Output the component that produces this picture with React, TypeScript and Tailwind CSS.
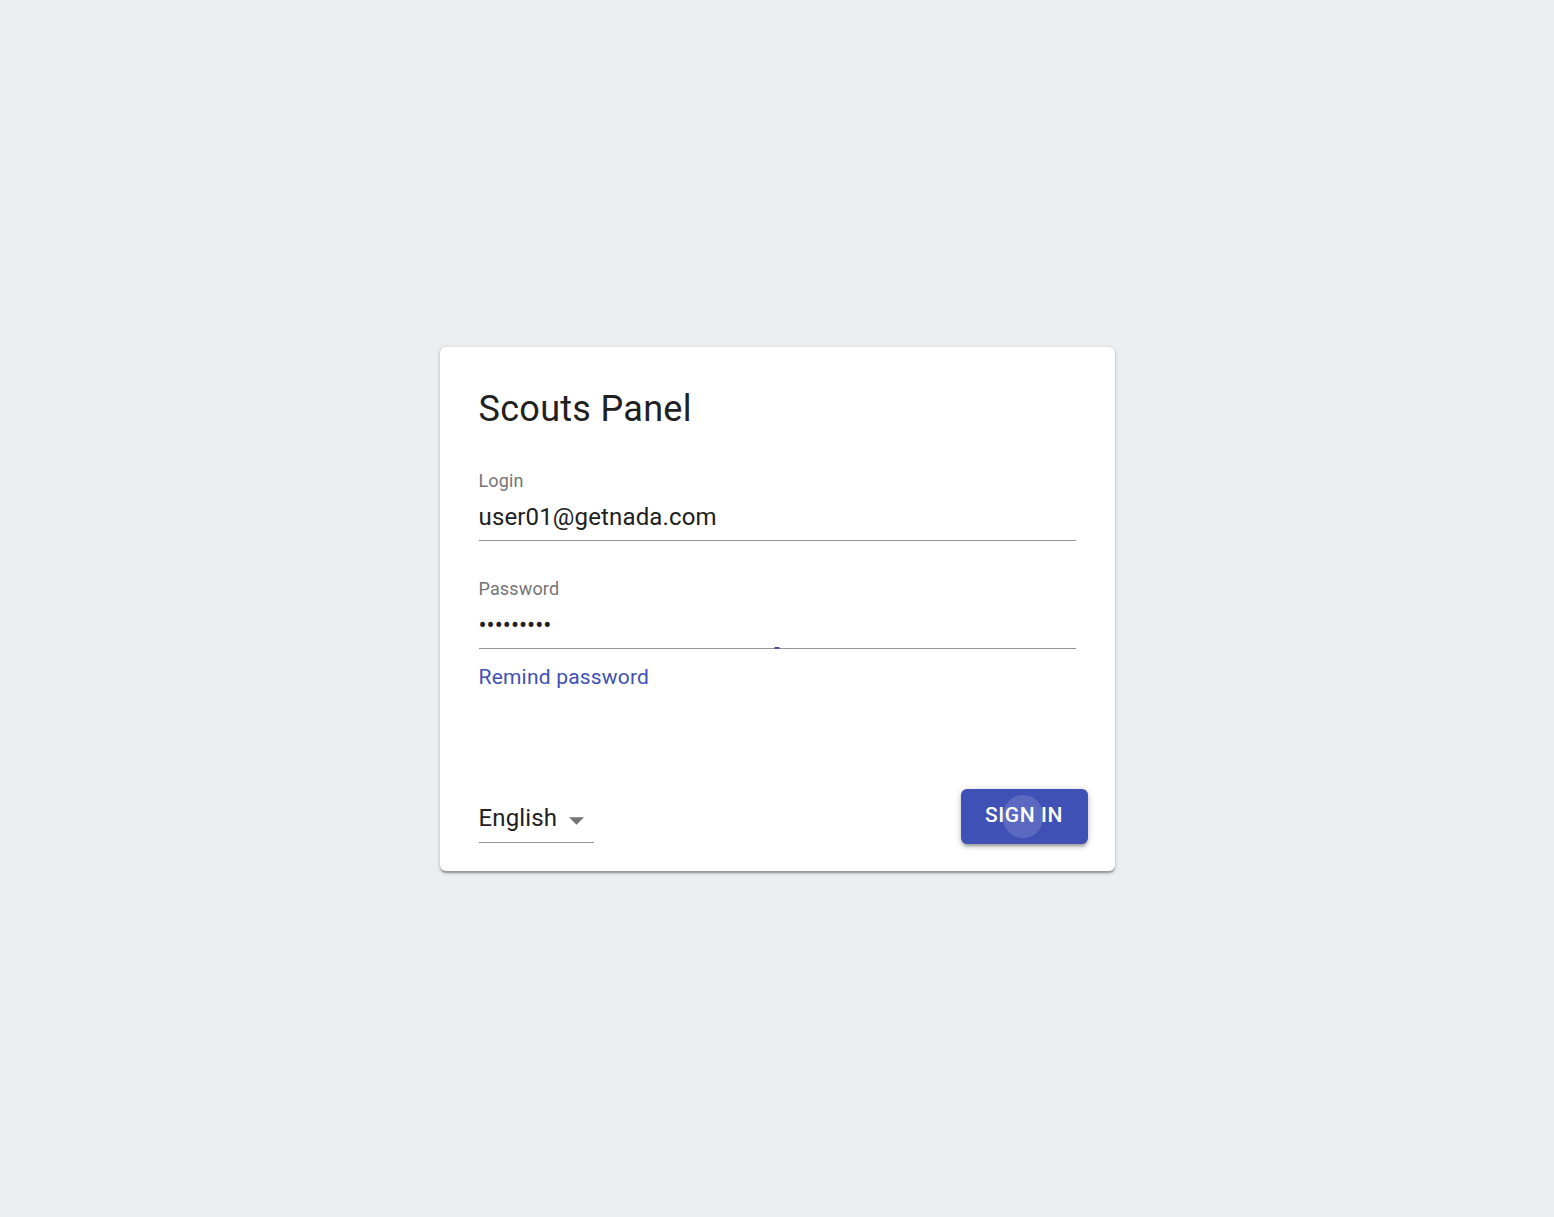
import React from 'react'

const font = { fontFamily: 'Roboto, "Liberation Sans", sans-serif' }

function Field({ label, children, focus }: { label: string; children: React.ReactNode; focus?: boolean }) {
    return (
        <div className="flex flex-col">
            <label className="text-[18px] leading-[21px] tracking-[0.15px] text-[#757575]">{label}</label>
            <div className="relative mt-[12px] pb-[9px] border-b-[1.5px] border-[#949494]">
                {children}
                {focus && (
                    <span className="absolute left-1/2 -bottom-[1.5px] w-[5px] h-[2px] -translate-x-1/2 bg-[#3f51b5]" />
                )}
            </div>
        </div>
    )
}

export default function App() {
    return (
        <div className="min-h-screen bg-[#eceff1] flex items-center justify-center" style={font}>
            <div className="w-[675px] bg-white rounded-[6px] shadow-[0_1.5px_4.5px_rgba(0,0,0,0.2),0_1.5px_1.5px_rgba(0,0,0,0.14),0_3px_1.5px_-1.5px_rgba(0,0,0,0.12)] flex flex-col">
                <div className="pt-[40px] px-[39px] flex flex-col">
                    <h1 className="text-[36px] leading-[44px] font-normal tracking-[0.3px] text-[#212121]">Scouts Panel</h1>

                    <div className="mt-[39px]">
                        <Field label="Login">
                            <div className="text-[24px] leading-[28px] tracking-[0.15px] text-[#212121]">user01@getnada.com</div>
                        </Field>
                    </div>

                    <div className="mt-[37px]">
                        <Field label="Password" focus>
                            <input
                                type="password"
                                readOnly
                                value="123456789"
                                className="block w-full text-[24px] leading-[28px] h-[28px] text-[#212121] outline-none bg-transparent p-0"
                                style={font}
                            />
                        </Field>
                    </div>

                    <a href="#" className="mt-[16px] self-start text-[21px] leading-[24px] tracking-[0.2px] text-[#3f51b5]">
                        Remind password
                    </a>
                </div>

                <div className="mt-[100px] pl-[39px] pr-[27px] pb-[27px] flex items-end justify-between">
                    <div className="relative pr-[37px] pb-[9px] border-b-[1.5px] border-[#949494] mb-[0.5px]">
                        <span className="text-[24px] leading-[28px] tracking-[0.15px] text-[#212121]">English</span>
                        <svg className="absolute right-[10px] top-[13px] w-[15px] h-[8px]" viewBox="0 0 10 5">
                            <path d="M0 0l5 5 5-5z" fill="#757575" />
                        </svg>
                    </div>

                    <button className="relative overflow-hidden w-[127px] h-[55px] rounded-[6px] bg-[#3f51b5] text-white text-[21px] font-medium tracking-[0.6px] uppercase shadow-[0_1.5px_7.5px_rgba(0,0,0,0.2),0_3px_3px_rgba(0,0,0,0.14),0_4.5px_1.5px_-3px_rgba(0,0,0,0.12)]">
                        <span className="absolute left-[42px] top-[6px] w-[40px] h-[43px] rounded-full bg-white/15" />
                        <span className="relative">Sign in</span>
                    </button>
                </div>
            </div>
        </div>
    )
}
